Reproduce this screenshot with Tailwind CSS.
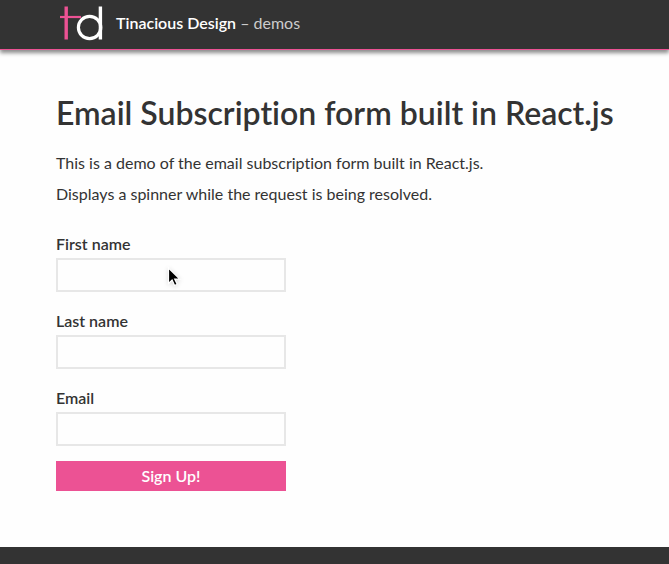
<!DOCTYPE html>
<html lang="en">
<head>
<meta charset="utf-8">
<meta name="viewport" content="width=device-width, initial-scale=1">
<title>Tinacious Design – demos</title>
<script src="https://cdn.jsdelivr.net/npm/@tailwindcss/browser@4"></script>
</head>
<body class="flex min-h-screen flex-col bg-[#fefefe] font-['Lato','Open_Sans',sans-serif] text-base text-[#333] [font-variant-ligatures:none]">
  <header class="flex h-[50px] items-center gap-3 border-b border-[#ec5294] bg-[#333] px-14 pb-1 shadow-[0_3px_4px_rgba(0,0,0,0.45)]">
    <svg class="h-9 w-12" viewBox="0 0 48 36" fill="none" aria-hidden="true">
      <path d="M10.2 1.5v33" stroke="#ec5294" stroke-width="3.4"/>
      <path d="M4 12h21" stroke="#ec5294" stroke-width="2.2"/>
      <circle cx="33.6" cy="22.5" r="11.2" stroke="#fff" stroke-width="3.2"/>
      <path d="M44.4 1.5v33" stroke="#fff" stroke-width="3.4"/>
    </svg>
    <a href="#" class="text-[#ccc]"><span class="font-semibold text-white">Tinacious Design</span> – demos</a>
  </header>
  <main class="flex-1 px-14 pt-10 pb-14">
    <h1 class="text-[32px] leading-[46px] font-semibold whitespace-nowrap">Email Subscription form built in React.js</h1>
    <p class="mt-4 leading-[22px]">This is a demo of the email subscription form built in React.js.</p>
    <p class="mt-[9px] leading-[22px]">Displays a spinner while the request is being resolved.</p>
    <form class="mt-7 flex w-[230px] flex-col">
      <label for="first" class="mb-[3px] leading-[22px] font-semibold">First name</label>
      <div class="relative mb-[18px] flex">
        <input id="first" type="text" class="h-[34px] w-full border-2 border-[#e7e7e7] px-2">
        <svg class="absolute top-2 left-[110px] h-[22px] w-4 drop-shadow-sm" viewBox="0 0 16 22" aria-hidden="true">
          <path d="M2.5 2v15.5l3.6-3.4 2.5 5.4 2.6-1.2-2.5-5.2h5z" fill="#000" stroke="#fff" stroke-width="1.2"/>
        </svg>
      </div>
      <label for="last" class="mb-[3px] leading-[22px] font-semibold">Last name</label>
      <input id="last" type="text" class="mb-[18px] h-[34px] border-2 border-[#e7e7e7] px-2">
      <label for="email" class="mb-[3px] leading-[22px] font-semibold">Email</label>
      <input id="email" type="email" class="mb-[15px] h-[34px] border-2 border-[#e7e7e7] px-2">
      <button type="button" class="h-[30px] bg-[#ec5294] font-semibold text-white">Sign Up!</button>
    </form>
  </main>
  <footer class="h-[17px] bg-[#333]"></footer>
</body>
</html>
